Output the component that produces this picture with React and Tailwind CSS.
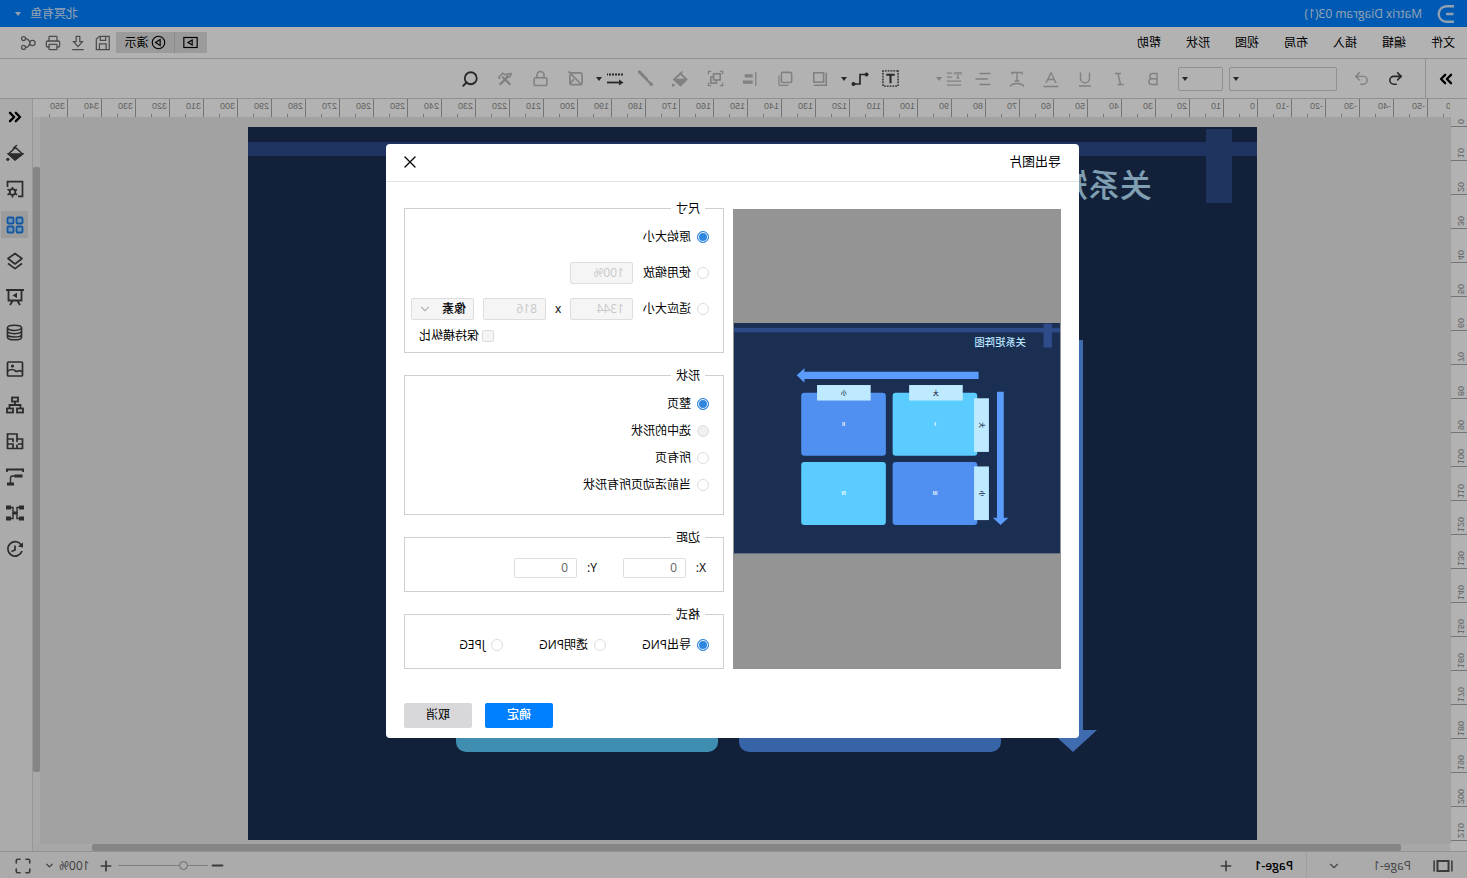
import React, { useState } from 'react';
import {
  ChevronDown,
  ChevronsLeft,
  ChevronsRight,
  Database,
  Layers2,
  Lock,
  Maximize,
  Minus,
  Network,
  Plus,
  Printer,
  Redo2,
  Search,
  Undo2,
  X,
} from 'lucide-react';

const menuItems = ['文件', '编辑', '插入', '布局', '视图', '形状', '帮助'];
const horizontalMarks = Array.from({ length: 42 }, (_, i) => (i - 6) * 10);
const verticalMarks = Array.from({ length: 22 }, (_, i) => i * 10);

const Icon = ({ size = 18, children }) => (
  <svg
    width={size}
    height={size}
    viewBox="0 0 18 18"
    fill="none"
    stroke="currentColor"
    strokeWidth="1.4"
    className="shrink-0"
    aria-hidden="true"
  >
    {children}
  </svg>
);

const Caret = () => (
  <svg width="6" height="4" viewBox="0 0 6 4" fill="currentColor" className="shrink-0" aria-hidden="true">
    <path d="M0 0h6L3 4z" />
  </svg>
);

const textTools = [
  { label: '加粗', icon: <Icon><path d="M5 3.5h4.5a2.6 2.6 0 0 1 0 5.300H5zM5 8.800h5.200a2.800 2.800 0 0 1 0 5.700H5z" /></Icon> },
  { label: '斜体', icon: <Icon><path d="M7 3.500h6M4.500 14.500h6M10 3.500l-2.500 11" /></Icon> },
  { label: '下划线', icon: <Icon><path d="M4.500 2.500v6a4.500 4.200 0 0 0 9 0v-6M3 16h12" /></Icon> },
  { label: '字体颜色', icon: <Icon><path d="M4 13L9 2.800 14 13M5.800 9.500h6.400M1.500 16.500h15" /></Icon> },
  { label: '弯曲文本', icon: <Icon><path d="M4 4.500V2.500h10v2M9 2.500V11M6.500 11h5M2 16.500c3-4 11-4 14 0" /></Icon> },
  { label: '对齐', icon: <Icon><path d="M1.500 3.500h11M4 9h12.500M1.500 14.500h11" /></Icon> },
  { label: '文本间距', caret: true, icon: <Icon size={16}><path d="M1 4V2h7v2M4.500 2v6M3 8h3M11 2.500h6M11 7h6M1 11.500h16M1 16h16" /></Icon> },
];

const shapeTools = [
  { label: '文本框', dark: true, icon: <Icon size={17}><rect x="1" y="1" width="16" height="16" strokeDasharray="2 1" /><path d="M4.500 5h9M9 5v9" strokeWidth="2.2" /></Icon> },
  { label: '连接线', dark: true, caret: true, icon: <Icon><path d="M2.500 4.500h6.500v9.500h6.500" strokeWidth="1.700" /><circle cx="2.500" cy="4.500" r="2" fill="currentColor" stroke="none" /><circle cx="15.500" cy="14" r="2" fill="currentColor" stroke="none" /></Icon> },
  { label: '置于底层', icon: <Icon size={16}><rect x="5" y="2" width="11" height="10.500" strokeWidth="1.800" /><path d="M2 2v14h14" strokeWidth="1.800" /></Icon> },
  { label: '置于顶层', icon: <Icon size={16}><rect x="1.500" y="1.500" width="11.500" height="11.500" rx="1.500" strokeWidth="1.800" /><path d="M15.800 5v9.500a1.800 1.800 0 0 1-1.800 1.800H5" /></Icon> },
  { label: '对齐形状', icon: <Icon size={16}><path d="M2.500 1v16" /><path d="M6 5.500h9M6 12.500h11" strokeWidth="3.600" /></Icon> },
  { label: '组合', icon: <Icon size={17}><path d="M1.500 4.500v-3h3M13.500 1.500h3v3M16.500 13.500v3h-3M4.500 16.500h-3v-3" /><rect x="4" y="4" width="7" height="6.500" strokeWidth="1.800" /><path d="M8 10.500V14h6V7.500h-3" strokeWidth="1.800" /></Icon> },
  { label: '填充', icon: <Icon><path d="M8.500 3.500l6.500 6-6.500 6-6-6z" strokeWidth="1.800" /><path d="M3 9.500h11.500l-6 5.500zM6.500 1.500l3 3" fill="currentColor" /><circle cx="15.800" cy="15" r="1.500" fill="currentColor" stroke="none" /></Icon> },
  { label: '格式刷', icon: <Icon size={17}><path d="M15.500 2L8 9.500" strokeWidth="3.200" strokeLinecap="round" /><path d="M8.500 9.500L3.500 14.500" strokeWidth="2.400" /><circle cx="3" cy="15" r="1.900" fill="currentColor" stroke="none" /></Icon> },
  { label: '线条样式', dark: true, caret: true, icon: <Icon><path d="M1 4.500h16" strokeDasharray="2 1" strokeWidth="1.800" /><path d="M3 12.500h14" strokeWidth="1.800" /><path d="M5 9.500l-4.500 3 4.500 3z" fill="currentColor" stroke="none" /></Icon> },
  { label: '裁剪', icon: <Icon size={17}><path d="M14 3H4a2 2 0 0 0-2 2v9a1.500 1.500 0 0 0 1.500 1.500H13a2 2 0 0 0 2-2V5M16.500 1.500L3.500 14.500M10.500 9.500l4.500 5" strokeWidth="1.700" /></Icon> },
  { label: '锁定', icon: <Lock size={17} strokeWidth={2.2} /> },
  { label: '工具', icon: <Icon size={16}><path d="M3 15.500l9-9M5 5.500l10 10" strokeWidth="2.600" /><path d="M8.500 4.500l3-2 4.500 4.500-1.500 2M2 3l1.500 3.500 3 .5.500-3.500z" strokeWidth="1.800" /></Icon> },
  { label: '查找', dark: true, icon: <Search size={18} strokeWidth={2.4} /> },
];

const sideTools = [
  { label: '展开', icon: <ChevronsLeft size={20} strokeWidth={2.8} className="text-black" /> },
  { label: '填充', icon: <Icon><path d="M1.500 10L8.500 3.500l7 6.500-6.500 5.500z" strokeWidth="1.600" /><path d="M1.500 10h14l-6.500 6zM7 1l4 3.500" fill="currentColor" /><circle cx="16.200" cy="15.300" r="1.600" fill="currentColor" stroke="none" /></Icon> },
  { label: '页面设置', icon: <Icon><path d="M6 16.300H1.500V1.700h15V7" strokeWidth="1.700" /><circle cx="11.500" cy="12" r="2.800" strokeWidth="1.800" /><path d="M11.500 7v2M11.500 15v2.500M7 9.500l2 1M14 13.500l2.500 1.200M7 14.700l2-1.200M14 10.500l2.500-1.200" strokeWidth="1.700" /></Icon> },
  { label: '符号库', active: true, icon: <Icon><g fill="#a9d4ff" strokeWidth="1.800"><rect x="1.500" y="1.500" width="6" height="6" rx="1" /><rect x="10.500" y="1.500" width="6" height="6" rx="1" /><rect x="1.500" y="10.500" width="6" height="6" rx="1" /><rect x="10.500" y="10.500" width="6" height="6" rx="1" /></g></Icon> },
  { label: '图层', icon: <Icon><path d="M9 1.500l7 5-7 5.500-7-5.500z" strokeWidth="1.600" strokeLinejoin="round" /><path d="M2 11.500l7 5.200 7-5.200" strokeWidth="1.600" strokeLinejoin="round" /></Icon> },
  { label: '演示', icon: <Icon><path d="M0 2h18M2.500 2v10.500h13V2M6.500 13l-2.500 4M11.500 13l2.500 4" strokeWidth="1.800" /><path d="M7 4.700l4.500 2.700L7 10z" fill="currentColor" stroke="none" /></Icon> },
  { label: '数据', icon: <Icon size={17}><ellipse cx="9" cy="4" rx="7.500" ry="2.800" strokeWidth="1.600" /><path d="M1.500 4v10c0 1.600 3.300 2.800 7.500 2.800s7.500-1.200 7.500-2.800V4M1.500 7.500c0 1.600 3.300 2.700 7.500 2.700s7.500-1.100 7.500-2.700M1.500 11c0 1.600 3.300 2.700 7.500 2.700s7.500-1.100 7.500-2.700" strokeWidth="1.600" /></Icon> },
  { label: '图片', icon: <Icon><rect x="1.500" y="2" width="15" height="14" rx="1" strokeWidth="1.700" /><circle cx="11.500" cy="6" r="1.600" fill="currentColor" stroke="none" /><path d="M2 12c3-4 4 1 6.500-1s4-2 8 0" strokeWidth="1.700" /></Icon> },
  { label: '组织结构', icon: <Icon><g strokeWidth="1.800"><rect x="6" y="1.500" width="6" height="4" /><rect x="1" y="12.500" width="6" height="4" /><rect x="11" y="12.500" width="6" height="4" /><path d="M9 5.500V9M3.500 12V9h11v3" /></g></Icon> },
  { label: '平面图', icon: <Icon><path d="M16.500 2v14.500h-15V7H7V2zM7 7v3M16 7h-5v3M1.500 12H6M11 16v-4h5M7 12.500V16" strokeWidth="1.700" /></Icon> },
  { label: '时间线', icon: <Icon><path d="M.8 4V1.500h16.400V4" strokeWidth="2" /><path d="M1.500 8h8M10 16h7" strokeWidth="3" /><path d="M9 8h2.500c1.500 0 2 1 2 2.500V15" /></Icon> },
  { label: '思维导图', icon: <Icon><g fill="currentColor" stroke="none"><rect x="0" y="1.500" width="5" height="4" /><rect x="13" y="1.500" width="5" height="4" /><rect x="0" y="12.500" width="5" height="4" /><rect x="13" y="12.500" width="5" height="4" /><rect x="6.500" y="7.500" width="5" height="3" /></g><path d="M5 3.500h2v11H5M13 3.500h-2v11h2" /></Icon> },
  { label: '历史', icon: <Icon><path d="M2.500 5.500a7.200 7.200 0 1 1-.5 5.500" strokeWidth="1.700" /><path d="M1 7.500V2.500l5 4z" fill="currentColor" stroke="none" /><path d="M9 5.500v4.500l3.500 1.500" strokeWidth="1.700" /></Icon> },
];

const Cell = ({ x, y, fill, text }) => (
  <g>
    <rect x={x} y={y} width="262" height="195" rx="10" fill={fill} />
    <text x={x + 131} y={y + 103} fontSize="15" fontWeight="700" fill="#ffffff" textAnchor="middle">{text}</text>
  </g>
);

const MatrixSlide = () => (
  <svg viewBox="0 0 1009 713" className="block h-auto w-full" role="img" aria-label="关系矩阵图">
    <rect width="1009" height="713" fill="#1b2f53" />
    <rect y="15" width="1009" height="14" fill="#2c4a88" />
    <rect x="25" y="2" width="26" height="74" fill="#2f4b8a" />
    <text x="105" y="70" fontSize="32" fontWeight="500" fill="#b8e4ff">关系矩阵图</text>
    <path d="M252 151h539v-11l24 22-24 23v-12H252z" fill="#5a9bfb" />
    <path d="M174 213h21v390h13l-24 22-24-22h14z" fill="#5a9bfb" />
    <Cell x={256} y={216} fill="#5bccff" text="Ⅰ" />
    <Cell x={539} y={216} fill="#4f90f0" text="Ⅱ" />
    <Cell x={256} y={430} fill="#4f90f0" text="Ⅲ" />
    <Cell x={539} y={430} fill="#5bccff" text="Ⅳ" />
    <g fill="#bdeaff">
      <rect x="301" y="192" width="166" height="48" />
      <rect x="586" y="192" width="166" height="48" />
      <rect x="220" y="233" width="46" height="166" />
      <rect x="220" y="444" width="46" height="166" />
    </g>
    <g fill="#14233f" fontSize="18" fontWeight="500" textAnchor="middle">
      <text x="384" y="224">大</text>
      <text x="669" y="224">小</text>
      <text transform="translate(249 316) rotate(-90)">大</text>
      <text transform="translate(249 528) rotate(-90)">小</text>
    </g>
  </svg>
);

const ToolButton = ({ tool, width }) => (
  <button
    type="button"
    title={tool.label}
    aria-label={tool.label}
    className={'flex h-6 shrink-0 items-center justify-center gap-1 ' + width + ' ' + (tool.dark ? 'text-[#3a3a3a]' : 'text-[#b9b9b9]')}
  >
    {tool.icon}
    {tool.caret && <Caret />}
  </button>
);

const Radio = ({ name, label, ...rest }) => (
  <label className="flex items-center gap-1.5 whitespace-nowrap">
    <input
      type="radio"
      name={name}
      className="h-3 w-3 shrink-0 appearance-none rounded-full border border-[#dcdcdc] bg-white checked:border-[#2f86dd] checked:bg-[#2f86dd] checked:shadow-[inset_0_0_0_1px_#fff] disabled:bg-[#f0f0f0]"
      {...rest}
    />
    {label}
  </label>
);

const Group = ({ title, className, children }) => (
  <fieldset className={'border border-[#cfcfcf] pr-1.5 pl-3.5 ' + className}>
    <legend className="ml-1 px-[5px] leading-4">{title}</legend>
    {children}
  </fieldset>
);

const disabledBox = 'h-[22px] w-[63px] rounded-xs border border-[#dedede] bg-[#f5f5f5] px-2 text-[#c8c8c8]';
const numberBox = 'h-5 w-[63px] rounded-xs border border-[#dedede] bg-white px-2 text-[#606266]';

const ExportDialog = ({ onClose }) => {
  const [size, setSize] = useState('original');
  const [range, setRange] = useState('page');
  const [format, setFormat] = useState('png');

  return (
    <div role="dialog" aria-label="导出图片" className="w-full max-w-[693px] rounded-sm bg-white text-xs text-black">
      <div className="flex h-[38px] items-center justify-between border-b border-[#e2e2e2] pr-3.5 pl-[18px]">
        <h2 className="text-[13px]">导出图片</h2>
        <button type="button" aria-label="关闭" onClick={onClose}>
          <X size={20} strokeWidth={1.5} />
        </button>
      </div>
      <div className="flex gap-[9px] px-[18px] pt-[19px]">
        <div className="mt-2 flex flex-1 items-center bg-[#949494] px-px">
          <MatrixSlide />
        </div>
        <div className="flex w-[320px] shrink-0 flex-col gap-[15px]">
          <Group title="尺寸" className="pt-[9px] pb-2">
            <div className="flex h-[22px] items-center">
              <Radio name="size" label="原始大小" checked={size === 'original'} onChange={() => setSize('original')} />
            </div>
            <div className="mt-3.5 flex h-[22px] items-center gap-2.5">
              <Radio name="size" label="使用缩放" checked={size === 'scale'} onChange={() => setSize('scale')} />
              <input aria-label="缩放" defaultValue="100%" disabled className={disabledBox} />
            </div>
            <div className="mt-3.5 flex h-[22px] items-center">
              <Radio name="size" label="适应大小" checked={size === 'fit'} onChange={() => setSize('fit')} />
              <input aria-label="宽度" defaultValue="1344" disabled className={disabledBox + ' ml-2.5'} />
              <span className="w-6 text-center">x</span>
              <input aria-label="高度" defaultValue="816" disabled className={disabledBox} />
              <div className="ml-[9px] grid w-[63px] items-center">
                <select aria-label="单位" className="col-start-1 row-start-1 h-[22px] w-full appearance-none rounded-xs border border-[#dedede] bg-[#f5f5f5] pl-[7px] font-medium">
                  <option>像素</option>
                </select>
                <ChevronDown size={14} className="pointer-events-none col-start-1 row-start-1 mr-[7px] justify-self-end text-[#b5b5b5]" />
              </div>
            </div>
            <label className="mt-2 flex h-4 items-center justify-end gap-[3px] pr-2">
              <input type="checkbox" className="h-3 w-3 appearance-none rounded-xs border border-[#dcdcdc] bg-[#f5f5f5] checked:bg-[#2f86dd]" />
              保持横纵比
            </label>
          </Group>
          <Group title="形状" className="pt-3 pb-[21px]">
            <div className="flex flex-col gap-[11px] leading-4">
              <Radio name="range" label="整页" checked={range === 'page'} onChange={() => setRange('page')} />
              <Radio name="range" label="选中的形状" disabled />
              <Radio name="range" label="所有页" checked={range === 'all'} onChange={() => setRange('all')} />
              <Radio name="range" label="当前活动页所有形状" checked={range === 'active'} onChange={() => setRange('active')} />
            </div>
          </Group>
          <Group title="边距" className="pt-3 pb-[13px]">
            <div className="flex gap-[26px] pl-[3px]">
              <label className="flex h-5 items-center gap-2.5">
                X:
                <input defaultValue="0" className={numberBox} />
              </label>
              <label className="flex h-5 items-center gap-2.5">
                Y:
                <input defaultValue="0" className={numberBox} />
              </label>
            </div>
          </Group>
          <Group title="格式" className="pt-3.5 pb-[15px]">
            <div className="grid grid-cols-[103px_103px_1fr] leading-4">
              <Radio name="format" label="导出PNG" checked={format === 'png'} onChange={() => setFormat('png')} />
              <Radio name="format" label="透明PNG" checked={format === 'alpha'} onChange={() => setFormat('alpha')} />
              <Radio name="format" label="JPEG" checked={format === 'jpeg'} onChange={() => setFormat('jpeg')} />
            </div>
          </Group>
        </div>
      </div>
      <div className="flex justify-end gap-[13px] px-[18px] pt-[34px] pb-2.5">
        <button type="button" onClick={onClose} className="h-[25px] w-[68px] rounded-xs bg-[#0080ff] font-medium text-white">确定</button>
        <button type="button" onClick={onClose} className="h-[25px] w-[68px] rounded-xs bg-[#d8d8da]">取消</button>
      </div>
    </div>
  );
};

const TopBar = () => (
  <header className="flex h-[27px] shrink-0 items-center bg-[#0080ff] pr-[15px] pl-3 text-xs text-[#d9eaff]">
    <svg width="18" height="20" viewBox="0 0 18 20" fill="none" stroke="#cfe6ff" strokeWidth="2.4" aria-hidden="true">
      <path d="M1 2.200h7.500a7.800 7.800 0 0 1 0 15.600H1M1.500 10H9" />
    </svg>
    <h1 className="ml-[15px] flex-1">Matrix Diagram 03(1)</h1>
    <button type="button" className="flex items-center gap-[9px]">
      北冥有鱼
      <Caret />
    </button>
  </header>
);

const MenuBar = () => (
  <div className="flex h-8 shrink-0 items-center justify-between border-b border-[#cfcfcf] bg-white pr-5 pl-3 text-xs text-black">
    <nav className="flex gap-[25px]">
      {menuItems.map((item) => (
        <button key={item} type="button">{item}</button>
      ))}
    </nav>
    <div className="flex items-center gap-[9px] text-[#6e6e6e]">
      <div className="-mr-1 flex h-[21px] items-center bg-[#dfdfdf] text-black">
        <button type="button" aria-label="从当前页演示" className="flex h-full w-[33px] items-center justify-center border-r border-[#c9c9c9]">
          <Icon size={15}><rect x="1" y="3" width="16" height="12" /><path d="M7 6l5 3-5 3z" /></Icon>
        </button>
        <button type="button" className="flex h-full w-[58px] items-center justify-center gap-0.5">
          <Icon size={15}><circle cx="9" cy="9" r="7.500" /><path d="M7 5.500l5.500 3.500L7 12.500z" /></Icon>
          演示
        </button>
      </div>
      <button type="button" aria-label="保存">
        <Icon size={16}><path d="M2 16.500V1.500h11l3.500 3v12zM6 1.500V6h6V1.500M5.500 16.500V10h7.500v6.500" /></Icon>
      </button>
      <button type="button" aria-label="下载">
        <Icon size={16}><path d="M7 1.500h4v6h3L9 13 4 7.500h3zM2.500 16.500h13" /></Icon>
      </button>
      <button type="button" aria-label="打印"><Printer size={16} strokeWidth={1.9} /></button>
      <button type="button" aria-label="分享">
        <Icon size={16}><circle cx="4" cy="9" r="3" /><circle cx="14" cy="4" r="2.200" /><circle cx="14" cy="14" r="2.200" /><path d="M7 8.500c1-3 2.500-4.500 4.800-4.500M7 9.500c1 3 2.500 4.500 4.800 4.500" /></Icon>
      </button>
    </div>
  </div>
);

const ToolBar = () => (
  <div className="flex h-10 shrink-0 items-center overflow-hidden border-b border-[#cfcfcf] bg-white text-[#3a3a3a]">
    <button type="button" aria-label="展开面板" className="flex h-full w-[42px] shrink-0 items-center justify-center border-r border-[#cfcfcf] text-black">
      <ChevronsRight size={20} strokeWidth={2.8} />
    </button>
    <button type="button" aria-label="撤销" className="ml-3 flex w-[34px] shrink-0 justify-center"><Undo2 size={17} strokeWidth={2.2} /></button>
    <button type="button" aria-label="重做" className="flex w-[34px] shrink-0 justify-center text-[#b9b9b9]"><Redo2 size={17} /></button>
    <div className="ml-2 grid w-[108px] shrink-0 items-center">
      <select aria-label="字体" className="col-start-1 row-start-1 h-6 appearance-none rounded-xs border border-[#cfcfcf]" />
      <span className="pointer-events-none col-start-1 row-start-1 mr-1 justify-self-end"><Caret /></span>
    </div>
    <div className="ml-1.5 grid w-[45px] shrink-0 items-center">
      <select aria-label="字号" className="col-start-1 row-start-1 h-6 appearance-none rounded-xs border border-[#cfcfcf]" />
      <span className="pointer-events-none col-start-1 row-start-1 mr-1 justify-self-end"><Caret /></span>
    </div>
    <div className="ml-2 flex">
      {textTools.map((tool) => <ToolButton key={tool.label} tool={tool} width="w-[34px]" />)}
    </div>
    <div className="ml-6 flex">
      {shapeTools.map((tool) => <ToolButton key={tool.label} tool={tool} width="w-[35px]" />)}
    </div>
  </div>
);

const StatusBar = () => (
  <footer className="flex h-[27px] shrink-0 items-center border-t border-[#d2d2d2] bg-[#f5f5f5] pt-px pr-3.5 pl-3.5 text-xs text-[#555]">
    <Icon size={20}><rect x="4" y="4.500" width="10" height="9" strokeWidth="1.800" /><path d="M1 4v10M17 4v10" /></Icon>
    <button type="button" className="ml-[22px] flex items-center gap-8 text-[#666]">
      Page-1
      <ChevronDown size={14} />
    </button>
    <button type="button" className="ml-5 h-full border-l border-[#e3e3e3] pl-[13px] font-semibold text-black">Page-1</button>
    <button type="button" aria-label="新建页" className="ml-5"><Plus size={16} strokeWidth={2.4} /></button>
    <div className="flex-1" />
    <button type="button" aria-label="缩小"><Minus size={17} strokeWidth={2.6} /></button>
    <input
      type="range"
      aria-label="缩放比例"
      defaultValue="24"
      className="mr-1 ml-px h-4 w-[90px] appearance-none bg-transparent [&::-webkit-slider-runnable-track]:h-px [&::-webkit-slider-runnable-track]:bg-[#b5b5b5] [&::-webkit-slider-thumb]:-mt-1 [&::-webkit-slider-thumb]:h-[9px] [&::-webkit-slider-thumb]:w-[9px] [&::-webkit-slider-thumb]:appearance-none [&::-webkit-slider-thumb]:rounded-full [&::-webkit-slider-thumb]:border [&::-webkit-slider-thumb]:border-[#999] [&::-webkit-slider-thumb]:bg-[#f5f5f5]"
    />
    <button type="button" aria-label="放大"><Plus size={16} strokeWidth={2.6} /></button>
    <button type="button" className="ml-2 flex items-center gap-1">
      100%
      <ChevronDown size={11} strokeWidth={2.6} />
    </button>
    <button type="button" aria-label="全屏" className="ml-3"><Maximize size={18} strokeWidth={2.2} /></button>
  </footer>
);

const HorizontalRuler = () => (
  <div className="flex h-[18px] min-w-0 overflow-hidden bg-white">
    <div className="-ml-3 flex">
      {horizontalMarks.map((mark) => (
        <div key={mark} className="flex w-[34px] shrink-0 border-l border-[#a8a8a8]">
          <span className="w-[17px] pl-0.5 leading-[15px]">{mark}</span>
          <span className="h-[3px] self-end border-l border-[#a8a8a8]" />
        </div>
      ))}
    </div>
  </div>
);

const VerticalRuler = () => (
  <div className="min-h-0 overflow-hidden border-r border-[#e3e3e3] bg-white">
    <div className="-mt-6">
      {verticalMarks.map((mark) => (
        <div key={mark} className="flex h-[34px] items-end border-b border-[#a8a8a8]">
          <span className="rotate-180 pt-0.5 leading-[13px] [writing-mode:vertical-rl]">{mark}</span>
        </div>
      ))}
    </div>
  </div>
);

export default function App() {
  const [open, setOpen] = useState(true);

  return (
    <div className="relative flex h-screen -scale-x-100 flex-col overflow-hidden bg-white font-['Open_Sans','Noto_Sans_CJK_SC',sans-serif]">
      <TopBar />
      <MenuBar />
      <ToolBar />
      <div className="flex min-h-0 flex-1">
        <main className="grid min-w-0 flex-1 grid-cols-[17px_1fr_7px] grid-rows-[18px_1fr_7px] font-['Liberation_Sans',sans-serif] text-[9px] text-[#8c8c8c]">
          <div className="bg-white" />
          <div className="col-span-2 min-w-0"><HorizontalRuler /></div>
          <VerticalRuler />
          <div className="min-h-0 min-w-0 overflow-hidden bg-[#e9e9e9] pt-[10px] pr-[208px] pl-[193px] font-['Open_Sans','Noto_Sans_CJK_SC',sans-serif]">
            <MatrixSlide />
          </div>
          <div className="flex flex-col bg-[#f2f2f2] pt-[50px] pb-[72px]">
            <div className="flex-1 rounded-xs bg-[#bfbfbf]" />
          </div>
          <div className="bg-white" />
          <div className="col-span-2 flex bg-[#efefef] pr-[59px] pl-[49px]">
            <div className="flex-1 rounded-xs bg-[#bfbfbf]" />
          </div>
        </main>
        <aside className="flex w-[33px] shrink-0 flex-col items-center gap-[9px] border-l border-[#d8d8d8] bg-[#f5f5f5] pt-1 pl-0.5 text-[#3f3f3f]">
          {sideTools.map((tool) => (
            <button
              key={tool.label}
              type="button"
              title={tool.label}
              aria-label={tool.label}
              className={'flex h-[27px] w-[27px] shrink-0 items-center justify-center ' + (tool.active ? 'bg-[#e0e0e0] text-[#1a7fe8]' : '')}
            >
              {tool.icon}
            </button>
          ))}
        </aside>
      </div>
      <StatusBar />
      {open && (
        <div className="absolute inset-0 flex items-center justify-center bg-black/30 pt-[3px] pl-0.5">
          <ExportDialog onClose={() => setOpen(false)} />
        </div>
      )}
    </div>
  );
}
